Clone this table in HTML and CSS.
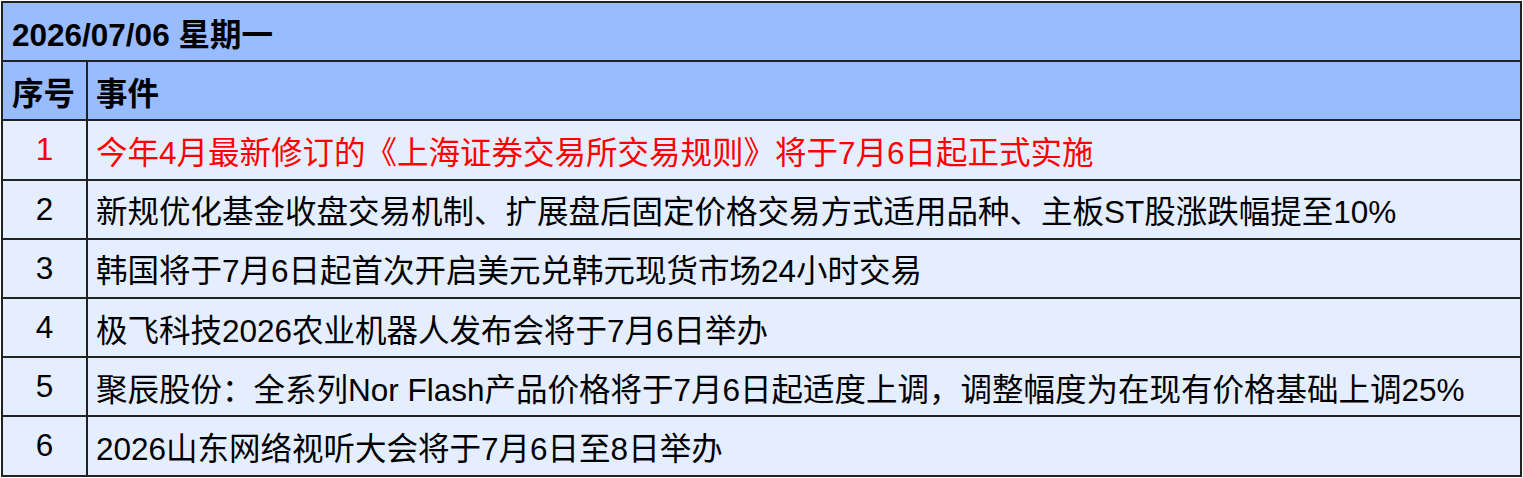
FILE: index.html
```html
<!DOCTYPE html>
<html lang="zh-CN">
<head>
<meta charset="utf-8">
<title>2026/07/06 星期一</title>
<link rel="stylesheet" href="styles.css">
</head>
<body>
<table class="events">
  <thead>
    <tr class="title-row"><th colspan="2" class="title">2026/07/06 星期一</th></tr>
    <tr class="head-row"><th class="col-no">序号</th><th class="col-ev">事件</th></tr>
  </thead>
  <tbody>
    <tr class="hl"><td class="no">1</td><td class="ev">今年4月最新修订的《上海证券交易所交易规则》将于7月6日起正式实施</td></tr>
    <tr><td class="no">2</td><td class="ev">新规优化基金收盘交易机制、扩展盘后固定价格交易方式适用品种、主板ST股涨跌幅提至10%</td></tr>
    <tr><td class="no">3</td><td class="ev">韩国将于7月6日起首次开启美元兑韩元现货市场24小时交易</td></tr>
    <tr><td class="no">4</td><td class="ev">极飞科技2026农业机器人发布会将于7月6日举办</td></tr>
    <tr><td class="no">5</td><td class="ev">聚辰股份：全系列Nor Flash产品价格将于7月6日起适度上调，调整幅度为在现有价格基础上调25%</td></tr>
    <tr><td class="no">6</td><td class="ev">2026山东网络视听大会将于7月6日至8日举办</td></tr>
  </tbody>
</table>
</body>
</html>
```

FILE: styles.css
```css
html, body {
  margin: 0;
  padding: 0;
  background: #ffffff;
}

body {
  padding: 1px 0 0 1px;
  font-family: "Liberation Sans", Arial, "Noto Sans CJK SC", sans-serif;
  color: #000000;
}

.events {
  border-collapse: collapse;
  width: 1521px;
  font-size: 31.5px;
}

.events th,
.events td {
  border: 2px solid #222222;
  height: 57.2px;
  padding: 0;
  vertical-align: middle;
  white-space: nowrap;
}

.title-row th,
.head-row th {
  background: #99bbff;
  font-weight: bold;
  text-align: left;
}

.title {
  padding-left: 9px !important;
}

.col-no {
  width: 74px;
  padding-left: 9px !important;
}

.col-ev {
  padding-left: 8px !important;
}

.events td {
  background: #e5eeff;
}

.no {
  text-align: center;
}

.ev {
  padding-left: 8px !important;
}

.hl td {
  color: #ff0000;
}
```
